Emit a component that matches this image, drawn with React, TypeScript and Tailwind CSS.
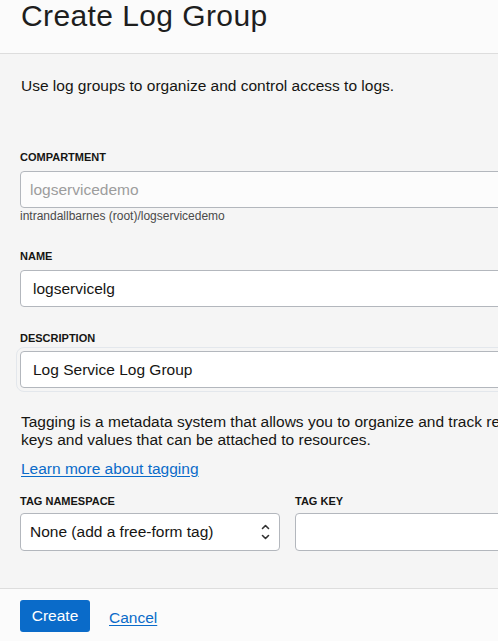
const Field = ({ label, gap = "mb-[7px]", children }: { label: string; gap?: string; children: React.ReactNode }) => (
  <div>
    <div className={`text-[11px] leading-[13px] font-bold text-[#161513] ${gap}`}>{label}</div>
    {children}
  </div>
);

const App = () => {
  return (
    <div
      className="w-[498px] h-[641px] overflow-hidden flex flex-col bg-[#f5f5f5] text-[#161513]"
      style={{ fontFamily: '"Liberation Sans", Arial, sans-serif' }}
    >
      {/* header */}
      <div className="h-[54px] shrink-0 bg-[#fbfbfb] border-b border-[#dddddd] px-[21px] pt-[1px]">
        <h1 className="text-[30px] leading-[30px] tracking-[0.4px] font-normal text-[#1e1e1e] whitespace-nowrap">
          Create Log Group
        </h1>
      </div>

      {/* body */}
      <div className="flex-1 w-[820px] px-[20px] pt-[23px] text-[15.5px] leading-[18px]">
        <p className="pl-px">Use log groups to organize and control access to logs.</p>

        <div className="mt-[56px]">
          <Field label="COMPARTMENT">
            <div className="h-[37px] w-[700px] rounded-[4px] border border-[#b3b7bd] bg-[#fcfcfc] flex items-center px-[9px] text-[#9d9d9d]">
              logservicedemo
            </div>
          </Field>
          <div className="text-[12px] leading-[14px] text-[#4a4a4a] mt-px">intrandallbarnes (root)/logservicedemo</div>
        </div>

        <div className="mt-[27px]">
          <Field label="NAME">
            <div className="h-[37px] w-[700px] rounded-[4px] border border-[#b3b7bd] bg-white flex items-center px-[12px]">
              logservicelg
            </div>
          </Field>
        </div>

        <div className="mt-[25px]">
          <Field label="DESCRIPTION" gap="mb-[6px]">
            <div className="h-[37px] w-[700px] rounded-[4px] border border-[#b3b7bd] bg-white flex items-center px-[12px] outline outline-1 outline-offset-[3px] outline-[#e3e7ec]">
              Log Service Log Group
            </div>
          </Field>
        </div>

        <p className="mt-[25px] pl-px whitespace-nowrap">
          Tagging is a metadata system that allows you to organize and track resources within your tenancy. Tags are composed of
          <br />
          keys and values that can be attached to resources.
        </p>
        <a href="#" className="inline-block mt-[11px] pl-px text-[#0a6bc9] underline underline-offset-2">
          Learn more about tagging
        </a>

        <div className="mt-[17px] flex gap-[15px]">
          <div className="w-[260px]">
            <Field label="TAG NAMESPACE" gap="mb-[5px]">
              <div className="h-[38px] rounded-[4px] border border-[#b3b7bd] bg-white flex items-center justify-between pl-[9px] pr-[9px]">
                <span>None (add a free-form tag)</span>
                <svg width="9" height="18" viewBox="0 0 9 18" fill="none" stroke="#333" strokeWidth="1.6" strokeLinecap="round" strokeLinejoin="round">
                  <path d="M1.5 5.5 L4.5 2.5 L7.5 5.5" />
                  <path d="M1.5 12.5 L4.5 15.5 L7.5 12.5" />
                </svg>
              </div>
            </Field>
          </div>
          <div className="w-[260px]">
            <Field label="TAG KEY" gap="mb-[5px]">
              <div className="h-[38px] rounded-[4px] border border-[#b3b7bd] bg-white" />
            </Field>
          </div>
        </div>
      </div>

      {/* footer */}
      <div className="h-[53px] shrink-0 bg-[#fbfbfb] border-t border-[#dddddd] px-[20px] pt-[11px] flex items-start gap-[19px] text-[15.5px]">
        <button className="h-[32px] w-[70px] rounded-[3px] bg-[#0a6bc9] text-white">Create</button>
        <a href="#" className="mt-[6px] text-[#0a6bc9] underline underline-offset-2">Cancel</a>
      </div>
    </div>
  );
};

export default App;
